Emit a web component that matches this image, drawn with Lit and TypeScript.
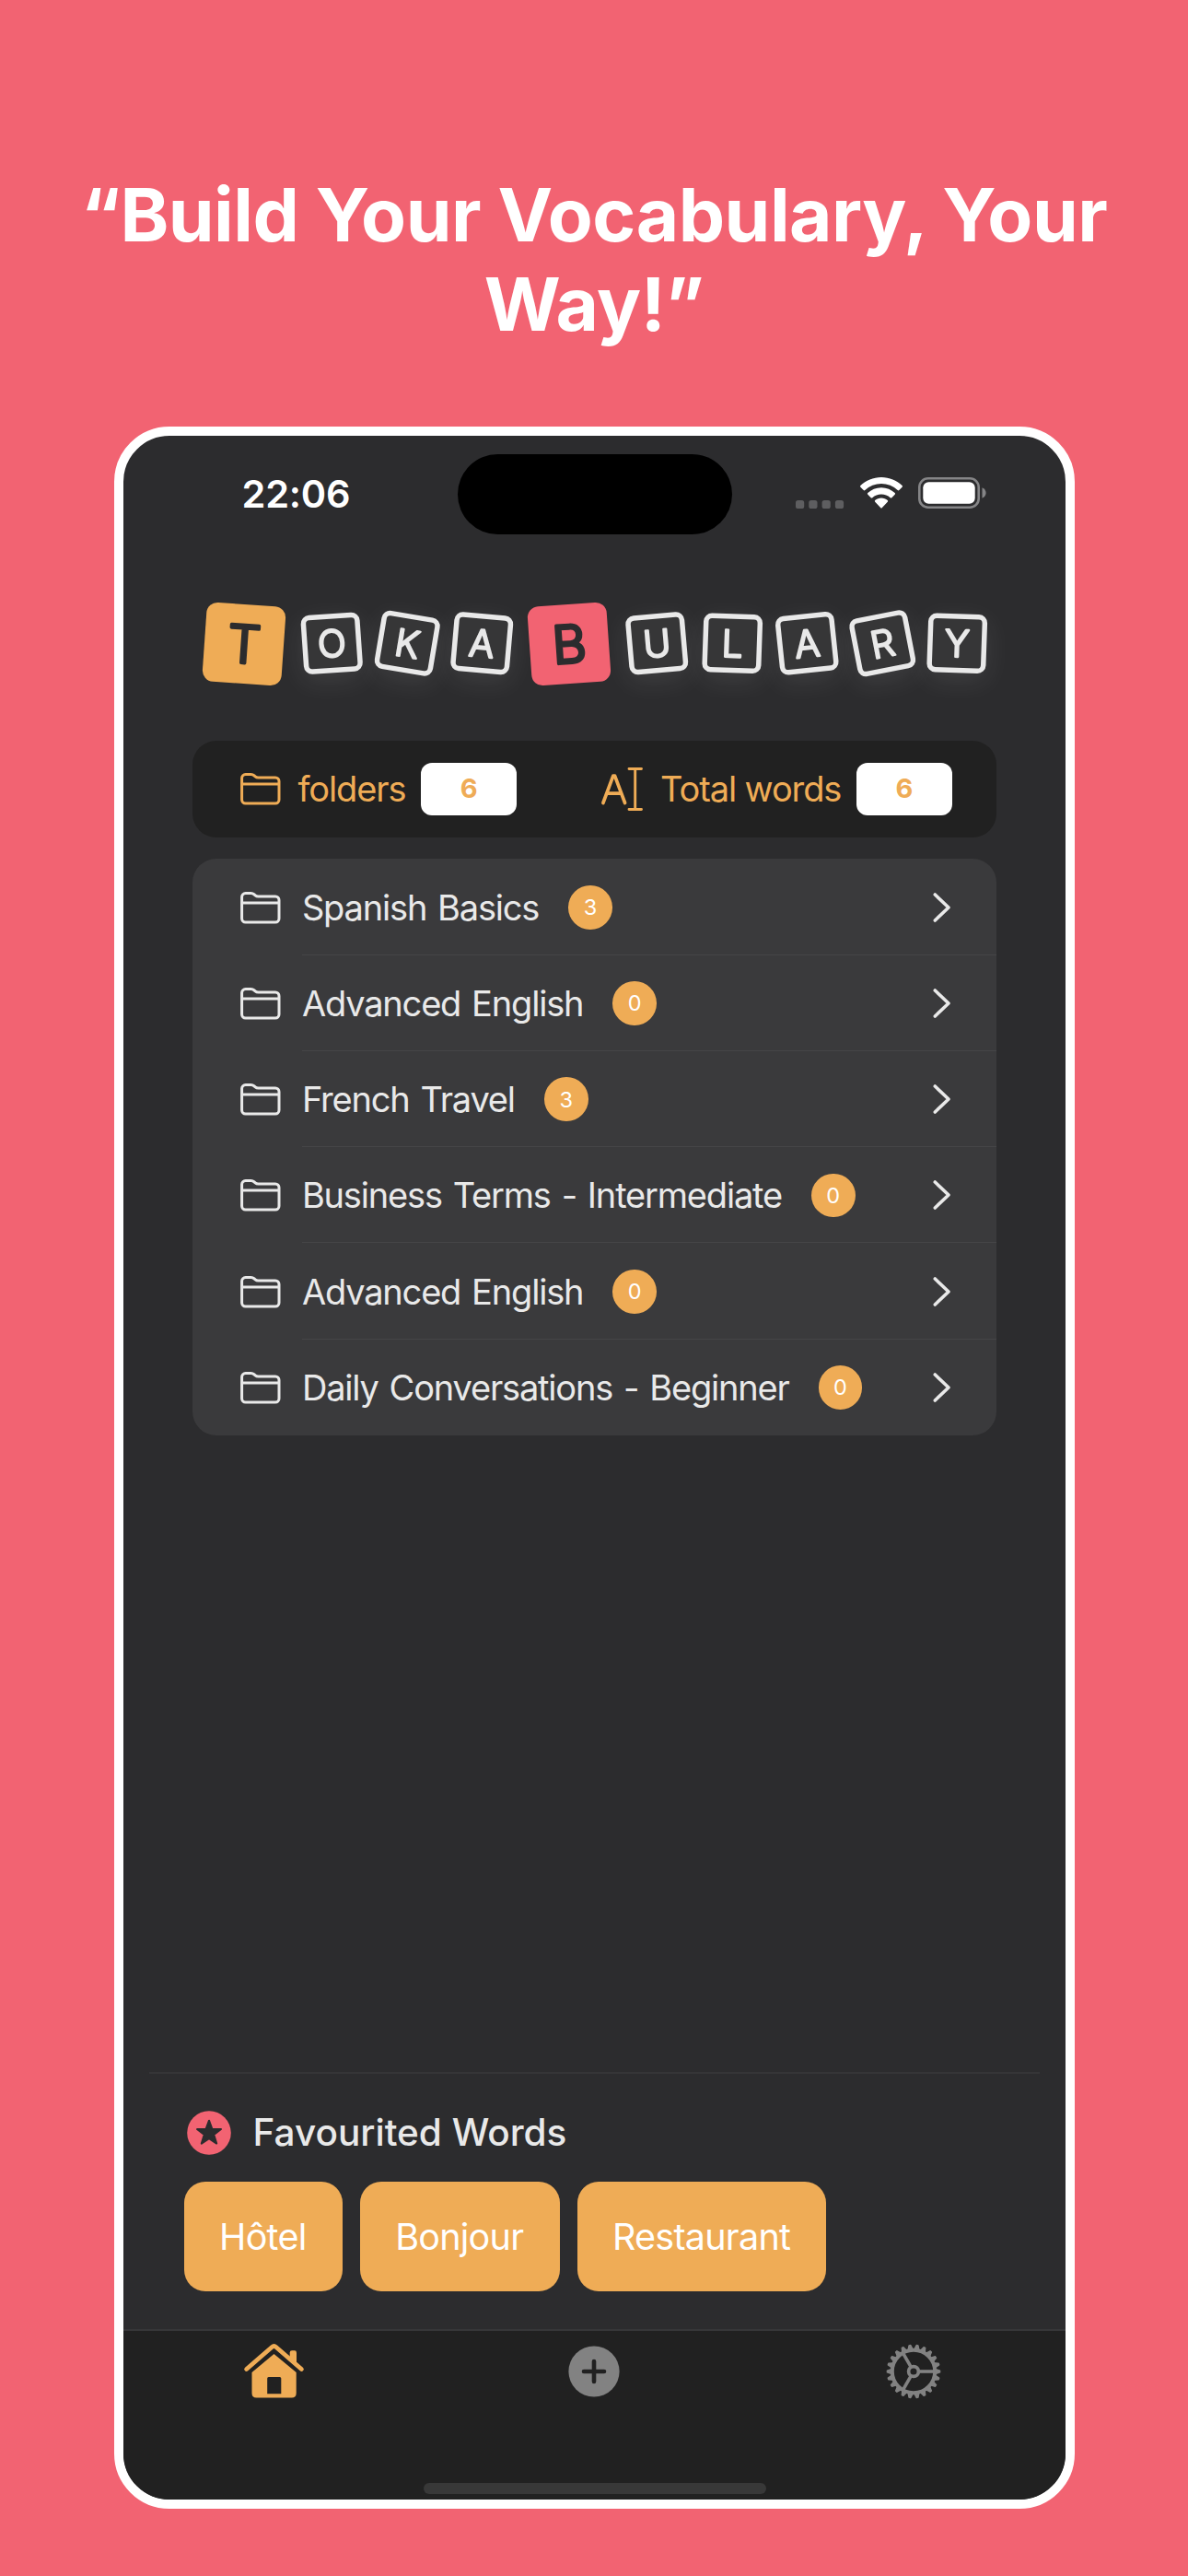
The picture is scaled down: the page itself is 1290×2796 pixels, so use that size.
import { LitElement, html, css, svg } from "lit";
import { customElement } from "lit/decorators.js";

interface Tile { letter: string; angle: number; tone?: "amber" | "rose"; }
interface Folder { name: string; count: number; }

const TILES: Tile[] = [
  { letter: "T", angle: 4, tone: "amber" },
  { letter: "O", angle: -4 },
  { letter: "K", angle: 9.5 },
  { letter: "A", angle: 5 },
  { letter: "B", angle: -4, tone: "rose" },
  { letter: "U", angle: -5 },
  { letter: "L", angle: 2 },
  { letter: "A", angle: -6 },
  { letter: "R", angle: -11 },
  { letter: "Y", angle: 2 },
];

const FOLDERS: Folder[] = [
  { name: "Spanish Basics", count: 3 },
  { name: "Advanced English", count: 0 },
  { name: "French Travel", count: 3 },
  { name: "Business Terms - Intermediate", count: 0 },
  { name: "Advanced English", count: 0 },
  { name: "Daily Conversations - Beginner", count: 0 },
];

const FAVOURITES = ["Hôtel", "Bonjour", "Restaurant"];

const folderIcon = html`<svg class="folder" width="44" height="35" viewBox="0 0 44 35" fill="none" stroke="currentColor" stroke-width="3" stroke-linejoin="round">
  <path d="M1.600 7V5.600A4 4 0 0 1 5.600 1.600H11.400C13 1.600 14 2 15.200 3L16.200 3.800C17.200 4.700 18 5 19.400 5H38A4 4 0 0 1 42 9V29A4 4 0 0 1 38 33H5.600A4 4 0 0 1 1.600 29Z"/>
  <path d="M1.600 12H42"/>
</svg>`;

const TOOTH_COUNT = 22;
const gearTeeth = Array.from({ length: TOOTH_COUNT }, (_, i) => (i * 360) / TOOTH_COUNT);

@customElement("app-root")
export class AppRoot extends LitElement {
  static styles = css`
    :host {
      display: block;
      font-family: Inter, "Liberation Sans", sans-serif;
      --rose: #f26372;
      --amber: #efac56;
      --ink: #2c2c2e;
      --bar: #212121;
      --soft: #e9e9e9;
    }
    * { box-sizing: border-box; }
    svg { display: block; flex: none; overflow: visible; }
    .page {
      width: 1290px; height: 2796px; background: var(--rose);
      display: flex; flex-direction: column; align-items: center;
      padding-top: 184px; overflow: hidden;
    }
    h1 {
      margin: 0 0 85px; height: 194px; width: 1130px; text-align: center; color: #fff;
      font-size: 80px; line-height: 97px; font-weight: 700; letter-spacing: -0.5px;
    }
    .phone {
      width: 1043px; height: 2260px; border: 10px solid #fff; border-radius: 60px;
      background: var(--ink); overflow: hidden; display: flex; flex-direction: column;
      margin-left: 1px; flex: none;
    }
    .status {
      height: 107px; flex: none; padding: 19.5px 86px 0 128.5px;
      display: grid; grid-template-columns: 234px 298px 1fr;
    }
    .time { color: #fff; font-size: 41.5px; font-weight: 600; line-height: 50px; padding-top: 18px; letter-spacing: -0.2px; }
    .island { background: #000; border-radius: 44px; height: 87.5px; }
    .signals { display: flex; justify-content: flex-end; align-items: flex-end; height: 59.5px; gap: 17.5px; }
    .logo { height: 93px; margin: 72px 0 0 85.4px; display: flex; align-items: center; gap: 16.9px; flex: none; }
    .tile { width: 64.5px; height: 64.5px; }
    .tile.big { width: 92px; height: 92px; }
    .frame { fill: #363637; stroke: var(--soft); stroke-width: 5.5; }
    .tile.outline { filter: drop-shadow(0 8px 14px rgba(255, 255, 255, 0.09)); }
    .glyph { font-weight: 300; stroke-linejoin: round; text-anchor: middle; }
    .small-glyph { font-size: 40.5px; fill: var(--soft); stroke: var(--soft); stroke-width: 2.3; }
    .big-glyph { font-size: 56.5px; fill: var(--ink); stroke: var(--ink); stroke-width: 3.5; }
    .amber { fill: var(--amber); }
    .rose { fill: var(--rose); }
    .stats {
      margin: 59px 0 0 75.4px; width: 872.3px; height: 104.5px; border-radius: 26px; background: var(--bar);
      color: var(--amber); display: flex; align-items: center; justify-content: space-between;
      padding: 0 47.5px 0 51.5px; flex: none;
    }
    .stat { display: flex; align-items: center; font-size: 38px; letter-spacing: -1.1px; line-height: 48px; white-space: nowrap; }
    .stat .folder { margin-right: 18.5px; margin-top: 1px; }
    .stat .cursor { margin-right: 19.5px; }
    .pill {
      width: 104.5px; height: 57px; border-radius: 12px; background: #fff; margin-left: 16.4px; letter-spacing: 0;
      display: flex; align-items: center; justify-content: center; font-size: 29px; font-weight: 700;
    }
    .list {
      margin: 23.8px 0 0 75.4px; width: 872.3px; border-radius: 26px; background: #3a3a3c; overflow: hidden;
      color: var(--soft); flex: none;
    }
    .row { height: 104.25px; display: flex; align-items: center; padding-left: 51.5px; }
    .row .folder { margin-top: 1.5px; }
    .body {
      flex: 1; height: 100%; margin-left: 23px; display: flex; align-items: center; padding: 1.5px 49px 0 0;
      border-bottom: 1.4px solid #454547; font-size: 38px; letter-spacing: -1.18px; word-spacing: 2.4px; white-space: nowrap;
    }
    .row:last-child .body { border-bottom-color: transparent; }
    .count {
      width: 47.7px; height: 47.7px; border-radius: 50%; background: var(--amber); color: #fff; margin-left: 32px;
      display: flex; align-items: center; justify-content: center; font-size: 23.5px; letter-spacing: 0;
    }
    .chevron { margin-left: auto; }
    .favs {
      margin: auto 28px 0; height: 279px; border-top: 2px solid #353537; padding: 39px 0 0 37.7px; flex: none;
      display: flex; flex-direction: column;
    }
    .fav-title { display: flex; align-items: center; gap: 23.4px; height: 50px; color: var(--soft); font-size: 40.5px; font-weight: 500; padding-left: 3.5px; }
    .fav-title span { padding-bottom: 2px; }
    .words { display: flex; gap: 19px; margin-top: 27.5px; }
    .word {
      height: 119px; border-radius: 23px; background: var(--amber); color: #fff; font-size: 39.5px; letter-spacing: -0.75px;
      display: flex; align-items: center; justify-content: center; padding: 1.5px 39.3px 0 38.4px;
    }
    .tabs { height: 185px; background: var(--bar); border-top: 2px solid #373739; flex: none; display: flex; flex-direction: column; align-items: center; }
    .tab-row { width: 100%; height: 87px; display: grid; grid-template-columns: 163px 1fr 163px; align-items: center; justify-items: center; padding: 0 83.5px 0 82px; }
    .home { width: 372px; height: 12px; border-radius: 6px; background: #383838; margin-top: 78px; }
  `;

  private tile(t: Tile) {
    if (t.tone) {
      return html`<svg class="tile big" viewBox="-46 -46 92 92">
        <g transform="rotate(${t.angle})">
          <rect class=${t.tone} x="-43" y="-43" width="86" height="86" rx="12"/>
          <text class="glyph big-glyph" y="20.5">${t.letter}</text>
        </g></svg>`;
    }
    return html`<svg class="tile outline" viewBox="-32.250 -32.250 64.500 64.500">
      <g transform="rotate(${t.angle})">
        <rect class="frame" x="-29.300" y="-29.300" width="58.600" height="58.600" rx="6.500"/>
        <text class="glyph small-glyph" y="14.800">${t.letter}</text>
      </g></svg>`;
  }

  render() {
    return html`<div class="page">
      <h1>“Build Your Vocabulary, Your Way!”</h1>
      <div class="phone">
        <div class="status">
          <div class="time">22:06</div>
          <div class="island"></div>
          <div class="signals">
            <svg width="52" height="9" viewBox="0 0 52 9" fill="#5e5e60">
              ${[0, 14.3, 28.6, 42.9].map((x) => svg`<rect x=${x} width="9.2" height="9" rx="2.6"/>`)}
            </svg>
            <svg width="46" height="34" viewBox="0 0 46 34" fill="#fff">
              <path d="M23 0C31.800 0 39.800 3.500 45.600 9.100A1.200 1.200 0 0 1 45.600 10.800L42.300 14.100A1.200 1.200 0 0 1 40.700 14.100A25.600 25.600 0 0 0 5.300 14.100A1.200 1.200 0 0 1 3.700 14.100L.4 10.800A1.200 1.200 0 0 1 .4 9.100C6.200 3.500 14.200 0 23 0Z"/>
              <path d="M23 11.300C28.700 11.300 33.900 13.500 37.700 17.100A1.200 1.200 0 0 1 37.700 18.800L34.300 22.200A1.200 1.200 0 0 1 32.700 22.200A14.400 14.400 0 0 0 13.300 22.200A1.200 1.200 0 0 1 11.700 22.200L8.300 18.800A1.200 1.200 0 0 1 8.300 17.100C12.100 13.500 17.300 11.300 23 11.300Z"/>
              <path d="M23 22.600C25.600 22.600 28 23.600 29.800 25.100A1.200 1.200 0 0 1 29.800 26.800L23.900 32.900A1.200 1.200 0 0 1 22.100 32.900L16.200 26.800A1.200 1.200 0 0 1 16.200 25.100C18 23.600 20.400 22.600 23 22.600Z"/>
            </svg>
            <svg width="74" height="34" viewBox="0 0 74 34">
              <rect x="1.300" y="1.300" width="64.400" height="31.400" rx="9.500" fill="none" stroke="#858587" stroke-width="2.600"/>
              <rect x="5.300" y="5.300" width="56.400" height="23.400" rx="6" fill="#fff"/>
              <path d="M69.500 11.200C72 12.200 73.600 14.400 73.600 17S72 21.800 69.500 22.800Z" fill="#858587"/>
            </svg>
          </div>
        </div>
        <div class="logo">${TILES.map((t) => this.tile(t))}</div>
        <div class="stats">
          <div class="stat">${folderIcon}<span>folders</span><span class="pill">6</span></div>
          <div class="stat">
            <svg class="cursor" width="45" height="47" viewBox="0 0 45 47" fill="none" stroke="currentColor" stroke-width="3.700" stroke-linecap="round" stroke-linejoin="round">
              <path d="M1.900 38.500L12.800 9.200H14.600L25.600 38.500M5.800 28.200H21.700"/>
              <path d="M30 1.500H43.500M30 45.500H43.500M36.700 1.500V45.500" stroke-width="2.900"/>
            </svg>
            <span>Total words</span><span class="pill">6</span>
          </div>
        </div>
        <div class="list">
          ${FOLDERS.map((f) => html`<div class="row">${folderIcon}
            <div class="body"><span>${f.name}</span><span class="count">${f.count}</span>
              <svg class="chevron" width="20" height="32" viewBox="0 0 20 32" fill="none" stroke="currentColor" stroke-width="3.600" stroke-linecap="round" stroke-linejoin="round"><path d="M2.300 2L17 16L2.300 30"/></svg>
            </div></div>`)}
        </div>
        <div class="favs">
          <div class="fav-title">
            <svg width="48" height="48" viewBox="-24 -24 48 48">
              <circle r="23.800" class="rose"/>
              <path d="M0 -13.300L3.300 -4.300L13 -4L5.300 2L8.200 11.600L0 6.100L-8.200 11.600L-5.300 2L-13 -4L-3.300 -4.300Z" fill="#2c2c2e" stroke="#2c2c2e" stroke-width="2" stroke-linejoin="round"/>
            </svg>
            <span>Favourited Words</span>
          </div>
          <div class="words">${FAVOURITES.map((w) => html`<span class="word">${w}</span>`)}</div>
        </div>
        <div class="tabs">
          <div class="tab-row">
            <svg width="65" height="58" viewBox="0 0 65 58" class="amber">
              <path d="M2.600 26.500L30.300 2.500Q32.500 .6 34.700 2.500L62.400 26.500" fill="none" stroke="#efac56" stroke-width="4.800" stroke-linecap="round"/>
              <path d="M49.700 16V8.500Q49.700 6.300 52 6.300H54.800Q57 6.300 57 8.500V22Z"/>
              <path fill-rule="evenodd" d="M8.500 30L32.500 10L56.700 30V52.500Q56.700 57.500 51.700 57.500H13.500Q8.500 57.500 8.500 52.500ZM25.200 36.500V53.300H40.300V36.500Q40.300 35 38.800 35H26.700Q25.200 35 25.200 36.500Z"/>
            </svg>
            <svg width="56" height="56" viewBox="-28 -28 56 56">
              <circle r="27.600" fill="#828282"/>
              <path d="M0 -11V11M-11 0H11" stroke="#212121" stroke-width="4.600" stroke-linecap="round"/>
            </svg>
            <svg width="60" height="60" viewBox="-30 -30 60 60" fill="none" stroke="#828282">
              <circle r="23.200" stroke-width="4"/>
              ${gearTeeth.map((a) => svg`<path transform="rotate(${a})" d="M24.500 -2.300L28.600 -.9V.9L24.500 2.300Z" fill="#828282" stroke-width="1.400" stroke-linejoin="round"/>`)}
              <circle r="5.400" stroke-width="3.700"/>
              ${[0, 120, 240].map((a) => svg`<path transform="rotate(${a})" d="M6.500 0H22" stroke-width="3.600"/>`)}
            </svg>
          </div>
          <div class="home"></div>
        </div>
      </div>
    </div>`;
  }
}
